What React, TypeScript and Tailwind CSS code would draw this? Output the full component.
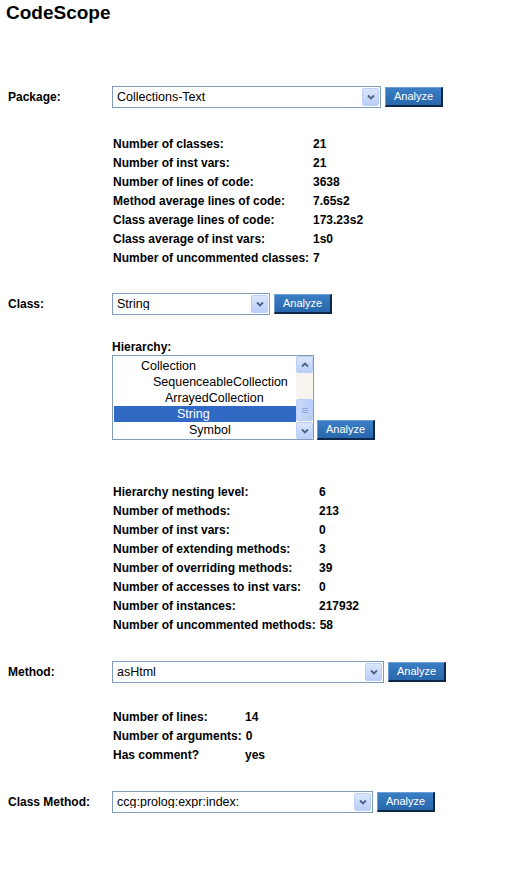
import React from "react";

const stats1 = [
  ["Number of classes:", "21"],
  ["Number of inst vars:", "21"],
  ["Number of lines of code:", "3638"],
  ["Method average lines of code:", "7.65s2"],
  ["Class average lines of code:", "173.23s2"],
  ["Class average of inst vars:", "1s0"],
  ["Number of uncommented classes:", "7"],
];

const stats2 = [
  ["Hierarchy nesting level:", "6"],
  ["Number of methods:", "213"],
  ["Number of inst vars:", "0"],
  ["Number of extending methods:", "3"],
  ["Number of overriding methods:", "39"],
  ["Number of accesses to inst vars:", "0"],
  ["Number of instances:", "217932"],
  ["Number of uncommented methods:", "58"],
];

const stats3 = [
  ["Number of lines:", "14"],
  ["Number of arguments:", "0"],
  ["Has comment?", "yes"],
];

// indent = 4px + 12px per nesting level
const hierarchy = [
  { name: "Collection", indent: "pl-[27px]" },
  { name: "SequenceableCollection", indent: "pl-[39px]" },
  { name: "ArrayedCollection", indent: "pl-[51px]" },
  { name: "String", indent: "pl-[63px]", selected: true },
  { name: "Symbol", indent: "pl-[75px]" },
];

function Chevron({ up }: { up?: boolean }) {
  return (
    <svg width="8" height="6" viewBox="0 0 8 6">
      <path
        d={up ? "M1 4.5 L4 1.5 L7 4.5" : "M1 1.5 L4 4.5 L7 1.5"}
        fill="none"
        stroke="#4d6185"
        strokeWidth="1.8"
      />
    </svg>
  );
}

function ArrowBox({ up, className }: { up?: boolean; className: string }) {
  return (
    <span
      className={
        "flex items-center justify-center rounded-[2px] border border-[#bccff7] bg-gradient-to-b from-[#dbe6fd] to-[#b9cef8] " +
        className
      }
    >
      <Chevron up={up} />
    </span>
  );
}

function Select({ value, width }: { value: string; width: string }) {
  return (
    <div className={"h-[22px] flex items-center border border-[#7f9db9] bg-white " + width}>
      <span className="flex-1 pl-[4px] text-[12.5px] leading-none text-black whitespace-nowrap overflow-hidden">
        {value}
      </span>
      <ArrowBox className="w-[17px] h-[18px] mr-[1px]" />
    </div>
  );
}

function AnalyzeButton() {
  return (
    <button className="ml-[4px] h-[20px] w-[58px] flex items-center justify-center border-t border-l border-r-2 border-b-2 border-t-[#6d9fd6] border-l-[#6d9fd6] border-r-[#0c2747] border-b-[#0c2747] bg-gradient-to-b from-[#3b7ec4] to-[#2867ab] text-[11px] leading-none text-white">
      Analyze
    </button>
  );
}

function Stats({ rows, labelWidth, className }: { rows: string[][]; labelWidth: string; className: string }) {
  return (
    <div className={"ml-[113px] flex flex-col " + className}>
      {rows.map(([label, value]) => (
        <div key={label} className="h-[19px] flex items-center text-[12px] font-bold text-black whitespace-nowrap">
          <span className={"pr-[4px] " + labelWidth}>{label}</span>
          <span>{value}</span>
        </div>
      ))}
    </div>
  );
}

function FieldRow({ label, value, width, className }: { label: string; value: string; width: string; className: string }) {
  return (
    <div className={"pl-[8px] flex items-center " + className}>
      <span className="w-[104px] text-[12px] font-bold text-black">{label}</span>
      <Select value={value} width={width} />
      <AnalyzeButton />
    </div>
  );
}

function HierarchyList() {
  return (
    <div className="mt-[24px] ml-[112px]">
      <div className="h-[16px] text-[12px] font-bold leading-[16px] text-black">Hierarchy:</div>
      <div className="flex items-end">
        <div className="w-[202px] h-[85px] flex border border-[#7f9db9] bg-white">
          <div className="flex-1 pt-[2px] pl-[1px] overflow-hidden">
            {hierarchy.map((item) => (
              <div
                key={item.name}
                className={
                  "h-[16px] text-[12.5px] leading-[16px] whitespace-nowrap " +
                  item.indent +
                  (item.selected ? " bg-[#316ac5] text-white" : " text-black")
                }
              >
                {item.name}
              </div>
            ))}
          </div>
          <div className="w-[17px] flex flex-col bg-[#f5f4ef]">
            <ArrowBox up className="h-[17px]" />
            <div className="flex-1 flex flex-col justify-end pb-[1px]">
              <div className="h-[22px] flex flex-col items-center justify-center gap-[1px] rounded-[2px] border border-[#bccff7] bg-gradient-to-r from-[#c9dafd] to-[#b9cdf8]">
                <span className="w-[6px] h-[1px] bg-[#8ea8dc]" />
                <span className="w-[6px] h-[1px] bg-[#8ea8dc]" />
                <span className="w-[6px] h-[1px] bg-[#8ea8dc]" />
              </div>
            </div>
            <ArrowBox className="h-[17px]" />
          </div>
        </div>
        <div className="ml-[-1px]">
          <AnalyzeButton />
        </div>
      </div>
    </div>
  );
}

export default function App() {
  return (
    <div className="min-h-screen bg-white font-['Liberation_Sans',Arial,sans-serif] text-black">
      <h1 className="pl-[6px] pt-[2px] text-[19px] font-bold leading-[22px]">CodeScope</h1>

      <FieldRow label="Package:" value="Collections-Text" width="w-[269px]" className="mt-[62px]" />
      <Stats rows={stats1} labelWidth="min-w-[200px]" className="mt-[26px]" />

      <FieldRow label="Class:" value="String" width="w-[158px]" className="mt-[26px]" />
      <HierarchyList />
      <Stats rows={stats2} labelWidth="min-w-[206px]" className="mt-[42px]" />

      <FieldRow label="Method:" value="asHtml" width="w-[272px]" className="mt-[27px]" />
      <Stats rows={stats3} labelWidth="min-w-[132px]" className="mt-[24px]" />

      <FieldRow label="Class Method:" value="ccg:prolog:expr:index:" width="w-[261px]" className="mt-[27px]" />
    </div>
  );
}
